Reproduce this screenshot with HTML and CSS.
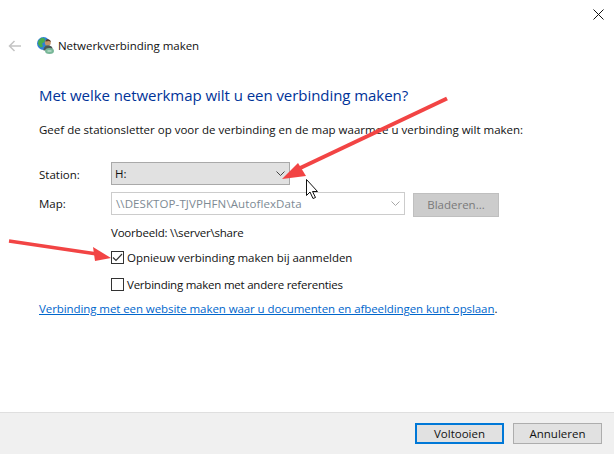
FILE: index.html
```html
<!DOCTYPE html>
<html lang="nl">
<head>
    <meta charset="UTF-8">
    <title>Netwerkverbinding maken</title>
    <link rel="stylesheet" href="styles.css">
</head>
<body>
    <div class="dialog">
        <div class="close-row">
            <svg class="close-icon" width="11" height="11" viewBox="0 0 11 11"><path d="M.5.5l10 10M10.5.5l-10 10" stroke="#111" fill="none"/></svg>
        </div>
        <div class="header">
            <svg class="back-icon" width="14" height="12" viewBox="0 0 14 12"><path d="M13 6H1.500M6.500 1l-5 5 5 5" stroke="#c4c4c4" stroke-width="1.500" fill="none"/></svg>
            <svg class="app-icon" width="17" height="17" viewBox="0 0 17 17">
                <circle cx="6.500" cy="6.500" r="6.500" fill="#2f7fd6"/>
                <path d="M1.500 3.500L4.500 .8 8 1.500 7.500 5 5 6.500 6 9.500 3.500 10.500 1 7zM8 9l3-1 1 2-2.500 2.500L7.500 12z" fill="#46ad4c"/>
                <circle cx="10.800" cy="5.800" r="3" fill="#c2946a"/>
                <path d="M8.500 4.500C8.500 2.800 9.800 2.200 11 2.200s2.800.8 2.800 2.800L12 4z" fill="#54392a"/>
                <path d="M6.500 13.500c0-3.500 2-5 4.500-5s4.500 1.200 4.500 3v2z" fill="#4a5656"/>
                <ellipse cx="12.500" cy="14" rx="4.500" ry="3" fill="#78b798"/>
                <path d="M10.500 14h4" stroke="#d8efe2"/>
            </svg>
            <span class="header-title">Netwerkverbinding maken</span>
        </div>

        <div class="content">
            <h1 class="heading">Met welke netwerkmap wilt u een verbinding maken?</h1>
            <p class="intro">Geef de stationsletter op voor de verbinding en de map waarmee u verbinding wilt maken:</p>

            <div class="form-row station-row">
                <span class="form-label station-label">Station:</span>
                <div class="combo combo-station">
                    <span>H:</span>
                    <svg class="chevron" width="9" height="5" viewBox="0 0 9 5"><path d="M.5.500L4.500 4.500 8.500.500" stroke="#444" fill="none"/></svg>
                </div>
            </div>
            <div class="form-row map-row">
                <span class="form-label">Map:</span>
                <div class="combo combo-map">
                    <span class="map-path">\\DESKTOP-TJVPHFN\AutoflexData</span>
                    <svg class="chevron" width="9" height="5" viewBox="0 0 9 5"><path d="M.5.500L4.500 4.500 8.500.500" stroke="#a8a8a8" fill="none"/></svg>
                </div>
                <div class="btn btn-disabled">Bladeren...</div>
            </div>

            <div class="options">
                <div class="example">Voorbeeld: \\server\share</div>
                <label class="check-row">
                    <span class="checkbox">
                        <svg width="11" height="9" viewBox="0 0 11 9"><path d="M1 4.500L4 7.500 10 1" stroke="#333" stroke-width="1.200" fill="none"/></svg>
                    </span>
                    Opnieuw verbinding maken bij aanmelden
                </label>
                <label class="check-row check-row-other">
                    <span class="checkbox"></span>
                    Verbinding maken met andere referenties
                </label>
            </div>

            <p class="link-row"><a href="#" class="link">Verbinding met een website maken waar u documenten en afbeeldingen kunt opslaan</a>.</p>
        </div>

        <div class="footer">
            <div class="btn btn-primary">Voltooien</div>
            <div class="btn">Annuleren</div>
        </div>
    </div>

    <!-- annotaties over de dialoog -->
    <svg class="overlay" width="614" height="454" viewBox="0 0 614 454">
        <path d="M447 98.500L296 170" stroke="#f24444" stroke-width="4" fill="none"/>
        <path d="M282 179L298 163 306 176z" fill="#f24444"/>
        <path d="M9 241L97 254" stroke="#f24444" stroke-width="3.500" fill="none"/>
        <path d="M111 258L93 247 95 261z" fill="#f24444"/>
        <path d="M306.500 179.500V195.500L310 192 313 198.500 315.500 197.500 312.500 191.500H317.500z" fill="#fff" stroke="#111"/>
    </svg>
</body>
</html>
```

FILE: styles.css
```css
* {
    margin: 0;
    padding: 0;
    box-sizing: border-box;
}

body {
    font-family: 'Open Sans', 'Noto Sans', sans-serif;
    font-size: 11.5px;
    color: #111;
    background: #fff;
    width: 614px;
    height: 454px;
    overflow: hidden;
    position: relative;
}

.dialog {
    display: flex;
    flex-direction: column;
    height: 454px;
}

.close-row {
    display: flex;
    justify-content: flex-end;
    padding: 9px 10px 0 0;
    height: 37px;
}

.header {
    display: flex;
    align-items: center;
    height: 17px;
    padding-left: 8px;
}

.back-icon {
    margin-right: 15px;
}

.app-icon {
    margin-right: 4px;
}

.header-title {
    letter-spacing: -0.04px;
}

.content {
    flex: 1;
    padding: 31px 0 0 39px;
}

.heading {
    font-size: 15px;
    font-weight: 400;
    letter-spacing: -0.05px;
    color: #003399;
    line-height: 20px;
}

.intro {
    margin-top: 17px;
    line-height: 16px;
}

.form-row {
    display: flex;
    align-items: center;
}

.station-row {
    margin-top: 24px;
    height: 23px;
}

.map-row {
    margin-top: 6px;
    height: 25px;
}

.form-label {
    width: 72px;
}

.station-label {
    padding-top: 2px;
}

.combo {
    display: flex;
    align-items: center;
    justify-content: space-between;
    height: 23px;
    padding: 0 4px 0 3px;
    border: 1px solid #a9a9a9;
}

.combo-station {
    width: 179px;
    background: #e1e1e1;
}

.combo-map {
    width: 294px;
    margin-top: -1px;
    border-color: #ccc;
    color: #7d8a94;
}

.map-path {
    padding-left: 1px;
    letter-spacing: 0.1px;
}

.options {
    margin-left: 72px;
    margin-top: 9px;
}

.example {
    line-height: 16px;
    letter-spacing: -0.2px;
}

.check-row {
    display: flex;
    align-items: center;
    gap: 3px;
    height: 13px;
    margin-top: 10px;
    letter-spacing: -0.05px;
}

.check-row-other {
    margin-top: 14px;
    letter-spacing: -0.23px;
}

.checkbox {
    display: flex;
    align-items: center;
    justify-content: center;
    width: 13px;
    height: 13px;
    border: 1px solid #333;
    background: #fff;
}

.link-row {
    margin-top: 10px;
    line-height: 16px;
    letter-spacing: -0.08px;
}

.link {
    color: #0066cc;
}

.footer {
    display: flex;
    justify-content: flex-end;
    gap: 9px;
    height: 42px;
    padding: 10px 12px 0 0;
    background: #f0f0f0;
    border-top: 1px solid #dfdfdf;
}

.btn {
    display: flex;
    align-items: center;
    justify-content: center;
    width: 89px;
    height: 21px;
    background: #e1e1e1;
    border: 1px solid #adadad;
}

.btn-primary {
    border: 2px solid #0078d7;
}

.btn-disabled {
    width: 86px;
    height: 24px;
    margin-left: 8px;
    margin-top: 2px;
    background: #cccccc;
    border-color: #bfbfbf;
    color: #7a7a7a;
}

.overlay {
    position: absolute;
    top: 0;
    left: 0;
    pointer-events: none;
}
```
